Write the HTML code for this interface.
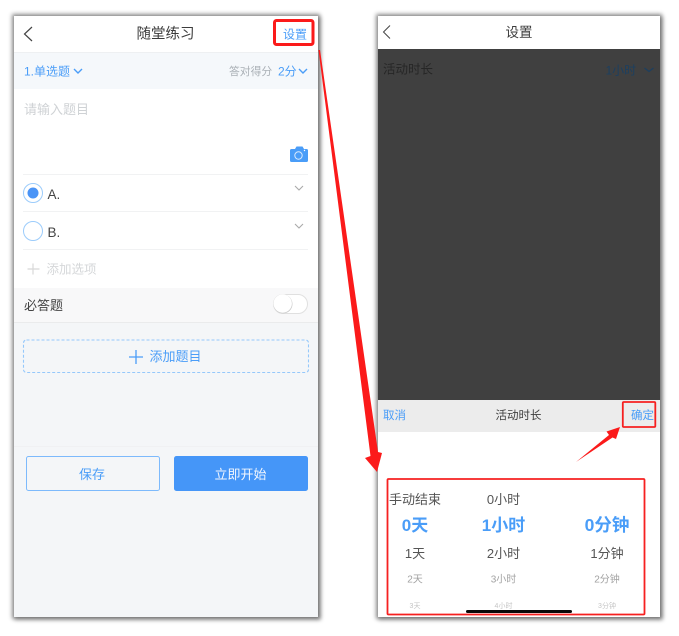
<!DOCTYPE html>
<html><head><meta charset="utf-8">
<style>
html,body{margin:0;padding:0;background:#fff}
#c{position:relative;width:679px;height:636px;overflow:hidden;background:#fff;font-family:"Liberation Sans","Noto Sans CJK SC",sans-serif;filter:blur(.35px)}
.a{position:absolute}
.t{position:absolute;white-space:nowrap;line-height:1;transform:translate(-50%,calc(-50% + .5px))}
.l{position:absolute;white-space:nowrap;line-height:1;transform:translateY(calc(-50% + .5px))}
.b{color:#4a9df8}
svg{position:absolute;overflow:visible}
</style></head><body>
<div id="c">
<!-- left phone -->
<div class="a" style="left:14px;top:16px;width:304px;height:601px;background:#f4f6f8;box-shadow:0 0 4px 2px rgba(0,0,0,.42),2px 2px 4px 1px rgba(0,0,0,.25)"></div>
<div class="a" style="left:14px;top:16px;width:304px;height:36px;background:#fff;border-bottom:1px solid #eef0f2"></div>
<div class="a" style="left:14px;top:53px;width:304px;height:36px;background:#f5f8fb"></div>
<div class="a" style="left:14px;top:89px;width:304px;height:199px;background:#fff"></div>
<div class="a" style="left:14px;top:288px;width:304px;height:34px;background:#f8f8f9;border-bottom:1px solid #eaebec"></div>
<div class="a" style="left:23px;top:174px;width:285px;height:1px;background:#f1f2f3"></div>
<div class="a" style="left:23px;top:211px;width:285px;height:1px;background:#f1f2f3"></div>
<div class="a" style="left:23px;top:249px;width:285px;height:1px;background:#f1f2f3"></div>
<svg style="left:0;top:0" width="679" height="636">
<path d="M32 27L24.500 34L32 41" fill="none" stroke="#444" stroke-width="1.200"/>
<path d="M74 69l4 4 4-4" fill="none" stroke="#4a9df8" stroke-width="1.400"/>
<path d="M299 69l4 4 4-4" fill="none" stroke="#4a9df8" stroke-width="1.400"/>
<path d="M295 186l4 4 4-4" fill="none" stroke="#aaa" stroke-width="1.100"/>
<path d="M295 224l4 4 4-4" fill="none" stroke="#aaa" stroke-width="1.100"/>
<path d="M290 150.500a1.500 1.500 0 0 1 1.500-1.500h3.500l1.500-2.500h6l1.500 2.500h2.500a1.500 1.500 0 0 1 1.500 1.500v10a1.500 1.500 0 0 1-1.500 1.500h-15a1.500 1.500 0 0 1-1.500-1.500z" fill="#4a9df8"/>
<circle cx="298.500" cy="155.500" r="3.700" fill="none" stroke="#d8e9fd" stroke-width="1"/>
<circle cx="304.500" cy="150.500" r=".7" fill="#fff"/>
<circle cx="33" cy="193" r="9.500" fill="#fff" stroke="#9cccfb" stroke-width="1"/>
<circle cx="33" cy="193" r="5.500" fill="#4a94f6"/>
<circle cx="33" cy="231" r="9.500" fill="#fff" stroke="#9cccfb" stroke-width="1"/>
<path d="M33 263.500v11M27.500 269h12" stroke="#d8d8d8" stroke-width="1.200"/>
<rect x="273.500" y="294.500" width="34" height="19" rx="9.500" fill="#fff" stroke="#e0e0e0"/>
<circle cx="283" cy="304" r="9.500" fill="#ccc"/>
<circle cx="282.700" cy="303.500" r="9.200" fill="#fff"/>
<rect x="23.500" y="340" width="285" height="32.500" rx="3" fill="none" stroke="#95c8fb" stroke-width="1.100" stroke-dasharray="3 2"/>
<path d="M136 350v14M129 357h14" stroke="#4a9df8" stroke-width="1.300"/>
</svg>
<div class="t" style="left:165.500px;top:34px;font-size:14.500px;color:#3c3c3c">随堂练习</div>
<div class="t b" style="left:295px;top:34px;font-size:12px">设置</div>
<div class="l b" style="left:24px;top:71px;font-size:12px">1.单选题</div>
<div class="l" style="left:229px;top:72px;font-size:10.800px;color:#aab0b6">答对得分</div>
<div class="l b" style="left:278px;top:71px;font-size:12px">2分</div>
<div class="l" style="left:24px;top:109px;font-size:13px;color:#cfd2d5">请输入题目</div>
<div class="l" style="left:47.500px;top:194px;font-size:13.500px;color:#444">A.</div>
<div class="l" style="left:47.500px;top:232px;font-size:13.500px;color:#444">B.</div>
<div class="l" style="left:46.500px;top:269px;font-size:12.500px;color:#d5d7d9">添加选项</div>
<div class="l" style="left:24px;top:305px;font-size:13px;color:#444">必答题</div>
<div class="l b" style="left:149.500px;top:356px;font-size:13px">添加题目</div>
<div class="a" style="left:14px;top:446px;width:304px;height:1px;background:#f0f1f3"></div>
<div class="a" style="left:25.500px;top:456px;width:132px;height:33px;border:1px solid #7dbafc;border-radius:2.500px"></div>
<div class="t b" style="left:92px;top:474px;font-size:13px">保存</div>
<div class="a" style="left:173.500px;top:456px;width:134px;height:35px;background:#4596f8;border-radius:2.500px"></div>
<div class="t" style="left:240.500px;top:474px;font-size:13px;color:#f2f7fe">立即开始</div>
<!-- right phone -->
<div class="a" style="left:378px;top:16px;width:282px;height:601px;background:#fff;box-shadow:0 0 4px 2px rgba(0,0,0,.42),2px 2px 4px 1px rgba(0,0,0,.25)"></div>
<div class="a" style="left:378px;top:49px;width:282px;height:351px;background:#404040"></div>
<div class="a" style="left:378px;top:400px;width:282px;height:32px;background:#ececec"></div>
<div class="t" style="left:519px;top:32px;font-size:13.500px;color:#3c3c3c">设置</div>
<div class="l" style="left:383px;top:69px;font-size:12.500px;color:#262626">活动时长</div>
<div class="l" style="left:605.500px;top:70px;font-size:12px;color:#1c3f60">1小时</div>
<div class="t b" style="left:394.500px;top:415.500px;font-size:11.500px">取消</div>
<div class="t" style="left:518.500px;top:415.500px;font-size:11.500px;color:#404040">活动时长</div>
<div class="t b" style="left:642.500px;top:415.500px;font-size:11.500px">确定</div>
<div class="t" style="left:415px;top:499px;font-size:13px;color:#555">手动结束</div>
<div class="t" style="left:503.500px;top:499px;font-size:13px;color:#555">0小时</div>
<div class="t b" style="left:415px;top:525px;font-size:17px;font-weight:bold">0天</div>
<div class="t b" style="left:503.500px;top:525px;font-size:17px;font-weight:bold">1小时</div>
<div class="t b" style="left:607px;top:525px;font-size:17.500px;font-weight:bold">0分钟</div>
<div class="t" style="left:415px;top:552.500px;font-size:13px;color:#555">1天</div>
<div class="t" style="left:503.500px;top:552.500px;font-size:13px;color:#555">2小时</div>
<div class="t" style="left:607px;top:552.500px;font-size:13px;color:#555">1分钟</div>
<div class="t" style="left:415px;top:579.500px;font-size:10px;color:#a2a2a2">2天</div>
<div class="t" style="left:503.500px;top:579.500px;font-size:10px;color:#a2a2a2">3小时</div>
<div class="t" style="left:607px;top:579.500px;font-size:10px;color:#a2a2a2">2分钟</div>
<div class="t" style="left:415px;top:606px;font-size:7px;color:#c4c4c4">3天</div>
<div class="t" style="left:503.500px;top:606px;font-size:7px;color:#c4c4c4">4小时</div>
<div class="t" style="left:607px;top:606px;font-size:7px;color:#c4c4c4">3分钟</div>
<div class="a" style="left:466px;top:610px;width:105.500px;height:3px;background:#0a0a0a;border-radius:2px"></div>
<svg style="left:0;top:0" width="679" height="636">
<path d="M390 25.500L383.500 32L390 38.500" fill="none" stroke="#444" stroke-width="1"/>
<path d="M644.500 68l4.500 3.500 4.500-3.500" fill="none" stroke="#1c3f60" stroke-width="1.200"/>
<!-- annotations -->
<rect x="274.500" y="20.500" width="38.500" height="24" rx="2" fill="none" stroke="#fb1a1a" stroke-width="3"/>
<rect x="622.800" y="402" width="32.500" height="25" rx="1" fill="none" stroke="#f62020" stroke-width="1.800"/>
<rect x="387.500" y="479" width="257" height="135.500" rx="1" fill="none" stroke="#f62020" stroke-width="1.800"/>
<path d="M318.500 50L320 50L378 452L382 453L377 472L365 458L370.500 456Z" fill="#fb1a1a"/>
<path d="M576 462L609 435L606.500 431.500L620 427L616 439L612.500 437.500Z" fill="#fb1a1a"/>
</svg>
</div>
</body></html>
